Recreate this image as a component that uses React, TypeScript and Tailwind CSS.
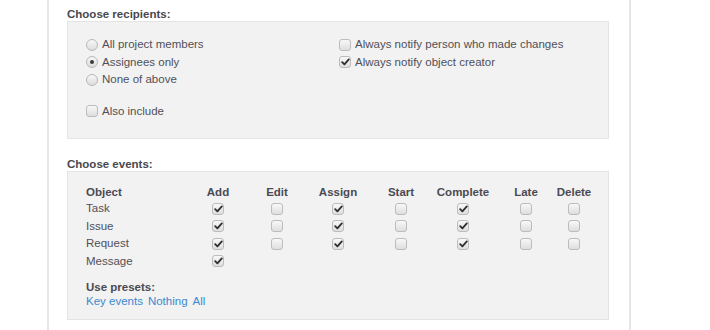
import React from "react";

function Check({ checked }: { checked?: boolean }) {
  return (
    <span className="relative inline-flex h-[12px] w-[12px] items-center justify-center rounded-[3px] border border-[#bcbcbc] bg-gradient-to-b from-[#f8f8f8] to-[#dedede]">
      {checked && (
        <svg width="9" height="8" viewBox="0 0 9 8" className="absolute">
          <path d="M1.2 4.2 L3.4 6.4 L7.8 1.4" fill="none" stroke="#2e2e2e" strokeWidth="1.8" strokeLinecap="round" strokeLinejoin="round" />
        </svg>
      )}
    </span>
  );
}

function Radio({ checked }: { checked?: boolean }) {
  return (
    <span className="relative inline-flex h-[12px] w-[12px] items-center justify-center rounded-full border border-[#b8b8b8] bg-gradient-to-b from-[#f8f8f8] to-[#dcdcdc]">
      {checked && <span className="h-[4px] w-[4px] rounded-full bg-[#3a3a3a]" />}
    </span>
  );
}

const cols = ["Add", "Edit", "Assign", "Start", "Complete", "Late", "Delete"];
const rows: { name: string; v: (boolean | null)[] }[] = [
  { name: "Task", v: [true, false, true, false, true, false, false] },
  { name: "Issue", v: [true, false, true, false, true, false, false] },
  { name: "Request", v: [true, false, true, false, true, false, false] },
  { name: "Message", v: [true, null, null, null, null, null, null] },
];

export default function App() {
  return (
    <div
      className="h-[330px] w-[710px] overflow-hidden bg-white text-[11.5px] text-[#505058]"
      style={{ fontFamily: '"Liberation Sans", Arial, sans-serif' }}
    >
      <div className="ml-[47px] h-full w-[584px] border-l-2 border-r-2 border-[#e6e6e6] pl-[18px] pr-[20px]">
        <div className="pt-[7px] font-bold leading-[14px] text-[#48484e]">Choose recipients:</div>
        <div className="h-[118px] border border-[#e4e4e4] bg-[#f2f2f2] pl-[18px] pt-[14px]">
          <div className="flex">
            <div className="w-[253px]">
              {[
                ["All project members", false],
                ["Assignees only", true],
                ["None of above", false],
              ].map(([t, c]) => (
                <div key={t as string} className="flex h-[17.5px] items-center gap-[4px]">
                  <Radio checked={c as boolean} />
                  <span>{t as string}</span>
                </div>
              ))}
              <div className="mt-[14px] flex h-[17.5px] items-center gap-[4px]">
                <Check />
                <span>Also include</span>
              </div>
            </div>
            <div>
              <div className="flex h-[17.5px] items-center gap-[4px]">
                <Check />
                <span>Always notify person who made changes</span>
              </div>
              <div className="flex h-[17.5px] items-center gap-[4px]">
                <Check checked />
                <span>Always notify object creator</span>
              </div>
            </div>
          </div>
        </div>

        <div className="pt-[18px] font-bold leading-[14px] text-[#48484e]">Choose events:</div>
        <div className="h-[149px] border border-[#e4e4e4] bg-[#f2f2f2] pl-[18px] pt-[13px]">
          <div className="grid grid-cols-[100px_64px_54px_68px_58px_66px_60px_36px]">
            <div className="flex h-[15px] items-center font-bold text-[#4a4a52]">Object</div>
            {cols.map((c) => (
              <div key={c} className="flex h-[15px] items-center justify-center font-bold text-[#4a4a52]">
                {c}
              </div>
            ))}
            {rows.map((r) => (
              <React.Fragment key={r.name}>
                <div className="flex h-[17.5px] items-center">{r.name}</div>
                {r.v.map((v, i) => (
                  <div key={i} className="flex h-[17.5px] items-center justify-center">
                    {v !== null && <Check checked={v} />}
                  </div>
                ))}
              </React.Fragment>
            ))}
          </div>
          <div className="mt-[10px] font-bold leading-[14px] text-[#4a4a52]">Use presets:</div>
          <div className="flex gap-[5px] leading-[14px] text-[#3c89cf]">
            <span>Key events</span>
            <span>Nothing</span>
            <span>All</span>
          </div>
        </div>
      </div>
    </div>
  );
}
